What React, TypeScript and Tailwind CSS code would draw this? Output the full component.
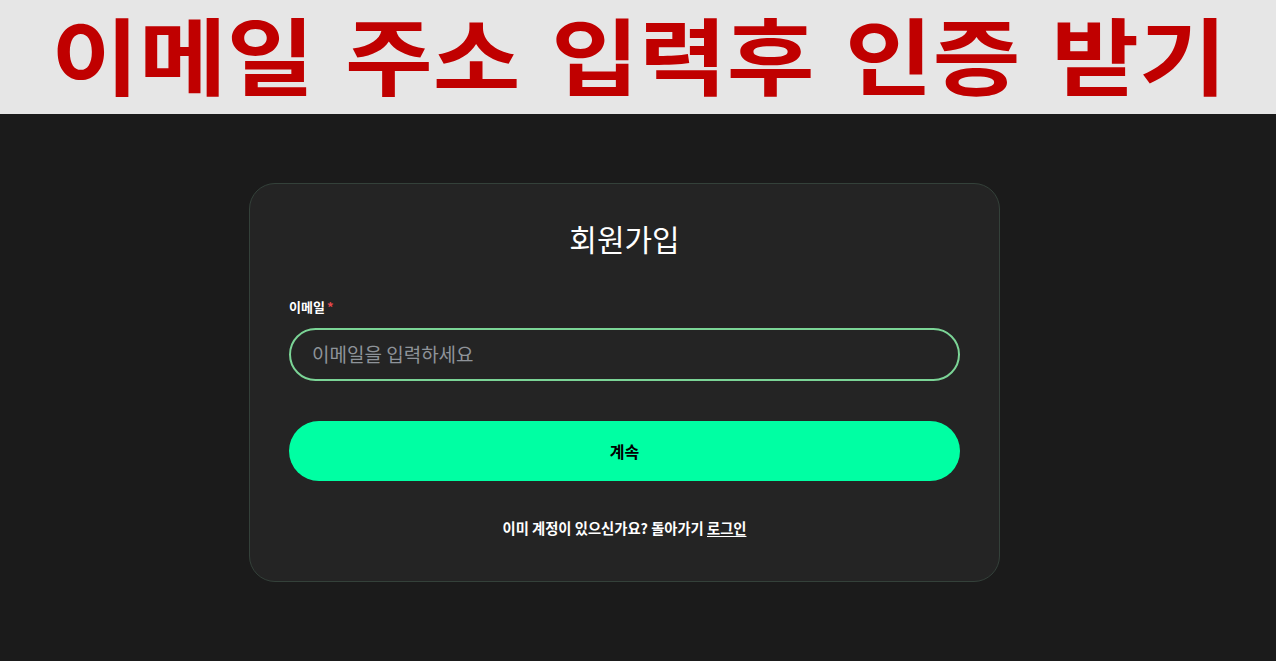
import React from "react";

export default function App() {
  const font = { fontFamily: '"Noto Sans CJK KR", "Noto Sans", sans-serif' };
  return (
    <div className="w-[1276px] h-[661px] flex flex-col bg-[#1b1b1b] overflow-hidden" style={font}>
      <div className="h-[114px] shrink-0 bg-[#e6e6e6] flex items-center justify-center overflow-hidden">
        <div className="text-[84px] font-bold text-[#c00000] leading-none scale-x-[1.135] [word-spacing:8px] pl-[2px] pb-[8px] whitespace-nowrap">
          이메일 주소 입력후 인증 받기
        </div>
      </div>
      <div className="flex-1 flex justify-center pt-[69px]">
        <div className="w-[751px] h-[399px] mr-[27px] rounded-[26px] border border-[#34413a] bg-[#242424] px-[39px] pt-[34px] flex flex-col">
          <h1 className="text-center text-[30px] leading-[40px] text-white font-normal">회원가입</h1>
          <label className="mt-[40px] text-[13px] leading-[18px] font-bold text-white flex items-center">
            이메일<span className="text-[#e5484d] ml-[2px]">*</span>
          </label>
          <div className="mt-[12px] h-[53px] rounded-full border-2 border-[#7bd496] flex items-center pl-[21px]">
            <span className="text-[19px] text-[#8e9399]">이메일을 입력하세요</span>
          </div>
          <button className="mt-[40px] h-[60px] rounded-full bg-[#00ffa3] text-[16px] font-bold text-black">
            계속
          </button>
          <div className="mt-[36px] text-center text-[14.3px] font-bold text-white">
            이미 계정이 있으신가요? 돌아가기 <span className="underline underline-offset-2">로그인</span>
          </div>
        </div>
      </div>
    </div>
  );
}
